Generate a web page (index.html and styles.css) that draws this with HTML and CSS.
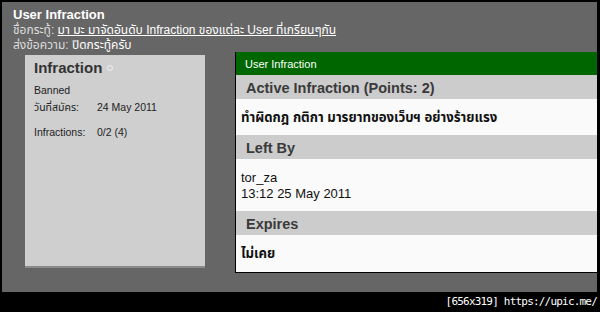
FILE: index.html
```html
<!DOCTYPE html>
<html>
<head>
<meta charset="utf-8">
<link rel="stylesheet" href="styles.css">
</head>
<body>
<div class="frame">
  <div class="head">
    <div class="title">User Infraction</div>
    <div class="meta"><span class="lbl">ชื่อกระทู้:</span> <a class="link" href="#">มา มะ มาจัดอันดับ Infraction ของแต่ละ User ที่เกรียนๆกัน</a></div>
    <div class="meta"><span class="lbl">ส่งข้อความ:</span> <span class="val">ปิดกระทู้ครับ</span></div>
  </div>
  <div class="row">
    <div class="user">
      <div class="uname">Infraction <span class="dot"></span></div>
      <div class="status">Banned</div>
      <div class="kv"><span class="k">วันที่สมัคร:</span><span class="v">24 May 2011</span></div>
      <div class="kv kv2"><span class="k">Infractions:</span><span class="v">0/2 (4)</span></div>
    </div>
    <div class="panel">
      <div class="phead">User Infraction</div>
      <div class="band">Active Infraction (Points: 2)</div>
      <div class="cell bold">ทำผิดกฎ กติกา มารยาทของเว็บฯ อย่างร้ายแรง</div>
      <div class="band">Left By</div>
      <div class="cell plain"><div>tor_za</div><div>13:12 25 May 2011</div></div>
      <div class="band">Expires</div>
      <div class="cell bold">ไม่เคย</div>
    </div>
  </div>
</div>
<div class="mark">[656x319] https://upic.me/</div>
</body>
</html>
```

FILE: styles.css
```css
html, body {
  margin: 0;
  padding: 0;
  background: #000;
}
body {
  width: 600px;
  height: 312px;
  overflow: hidden;
  font-family: "Liberation Sans", "Noto Sans Thai", "Noto Sans", sans-serif;
}
.frame {
  margin: 2px 3px 0 2px;
  height: 290px;
  background: #666;
  overflow: hidden;
  padding: 5px 0 0 11px;
  box-sizing: border-box;
}
.title {
  color: #fff;
  font-weight: bold;
  font-size: 13px;
  line-height: 16px;
}
.meta {
  font-size: 12px;
  line-height: 15px;
  color: #e6e6e6;
}
.lbl { color: #ddd; }
.link { color: #fff; text-decoration: underline; }
.val { color: #fff; }
.row {
  display: flex;
  align-items: flex-start;
  margin-top: -1px;
}
.user {
  margin: 3px 0 0 12px;
  width: 180px;
  height: 213px;
  background: #cfcfcf;
  border-bottom: 2px solid #8a8a8a;
  padding: 4px 0 0 9px;
  box-sizing: border-box;
  color: #222;
  font-size: 10.5px;
}
.uname {
  font-size: 15px;
  font-weight: bold;
  color: #333;
  line-height: 18px;
  display: flex;
  align-items: center;
  gap: 5px;
}
.dot {
  width: 4px;
  height: 4px;
  border: 1px solid #eee;
  border-radius: 50%;
}
.status { margin-top: 6px; line-height: 14px; }
.kv { display: flex; line-height: 14px; margin-top: 3px; }
.kv2 { margin-top: 11px; }
.k { width: 63px; }
.panel {
  flex: 1;
  margin-left: 30px;
  height: 221px;
  border-left: 1px solid #000;
  border-bottom: 1px solid #000;
  background: #fafafa;
  box-sizing: border-box;
}
.phead {
  height: 23px;
  background: #006600;
  color: #fff;
  font-size: 11px;
  line-height: 24px;
  padding-left: 9px;
}
.band {
  height: 24px;
  background: #cccccc;
  color: #3a3a3a;
  font-weight: bold;
  font-size: 14.5px;
  line-height: 27px;
  padding-left: 10px;
}
.cell {
  background: #fafafa;
  padding-left: 5px;
  color: #111;
}
.cell.bold {
  height: 36px;
  font-weight: bold;
  font-size: 13.2px;
  line-height: 38px;
}
.cell.plain {
  height: 52px;
  font-size: 13px;
  line-height: 15.5px;
  padding-top: 11px;
  box-sizing: border-box;
}
.mark {
  height: 20px;
  color: #fff;
  font-family: "DejaVu Sans Mono", monospace;
  font-size: 11px;
  line-height: 20px;
  text-align: right;
  padding-right: 3px;
  letter-spacing: -0.8px;
}
```
